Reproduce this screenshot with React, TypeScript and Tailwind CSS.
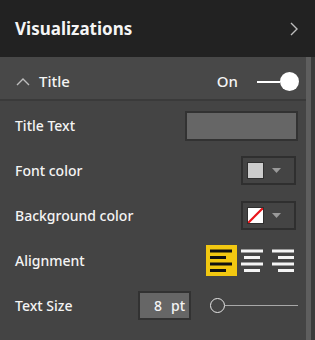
import React from 'react';

const font = { fontFamily: '"Noto Sans", "Open Sans", sans-serif' };

const Row = ({ label, children }: { label: string; children?: React.ReactNode }) => (
  <div className="flex h-[45px] items-center justify-between pl-[15px] pr-[8px]">
    <span className="text-[14px] font-medium text-[#f4f4f4]">{label}</span>
    {children}
  </div>
);

const Caret = () => (
  <svg width="9" height="5" viewBox="0 0 9 5" className="ml-[8px]">
    <path d="M0 0h9L4.5 5z" fill="#9a9a9a" />
  </svg>
);

const ColorPicker = ({ none }: { none?: boolean }) => (
  <div className="mr-[2px] flex h-[29px] w-[55px] items-center border-2 border-[#2f2f2f] pl-[4px]">
    <div className="relative h-[17px] w-[17px] overflow-hidden border border-[#2f2f2f] bg-[#cccccc]">
      {none && (
        <svg width="15" height="15" viewBox="0 0 15 15" className="absolute inset-0 bg-white">
          <path d="M0 15L15 0" stroke="#e8141a" strokeWidth="2.2" />
        </svg>
      )}
    </div>
    <Caret />
  </div>
);

const AlignIcon = ({ kind, active }: { kind: 'left' | 'center' | 'right'; active?: boolean }) => {
  const c = active ? '#111111' : '#f4f4f4';
  const long = 22;
  const short = 16;
  const x = (w: number) => (kind === 'left' ? 4 : kind === 'center' ? 4 + (long - w) / 2 : 4 + long - w);
  const ys = [6, 12.5, 19, 25.5];
  return (
    <div className={`h-[31px] w-[31px] ${active ? 'bg-[#f2c811]' : ''}`}>
      <svg width="31" height="31" viewBox="0 0 31 31">
        {ys.map((y, i) => {
          const w = i % 2 === 0 ? long : short;
          return <rect key={i} x={x(w)} y={y - 1.5} width={w} height="3" fill={c} />;
        })}
      </svg>
    </div>
  );
};

export default function App() {
  return (
    <div className="h-[340px] w-[315px] overflow-hidden bg-[#444444]" style={font}>
      <div className="flex h-[57px] items-center justify-between bg-[#222222] pl-[15px] pr-[17px]">
        <span className="text-[17px] font-bold text-[#f5f5f5]">Visualizations</span>
        <svg width="8" height="14" viewBox="0 0 8 14">
          <path d="M1 1l6 6-6 6" fill="none" stroke="#bdbdbd" strokeWidth="1.4" />
        </svg>
      </div>
      <div className="flex h-[283px]">
        <div className="flex-1">
          <div className="flex h-[44px] items-center border-b-2 border-[#3a3a3a] bg-[#484848] pl-[16px] pr-[7px] pt-[7px]">
            <svg width="14" height="8" viewBox="0 0 14 8">
              <path d="M1 7l6-6 6 6" fill="none" stroke="#bdbdbd" strokeWidth="1.4" />
            </svg>
            <span className="ml-[9px] text-[15px] font-medium text-[#f4f4f4]">Title</span>
            <span className="ml-auto text-[15px] font-medium text-[#f4f4f4]">On</span>
            <div className="ml-[19px] flex items-center">
              <div className="h-[2px] w-[23px] bg-white" />
              <div className="h-[19px] w-[19px] rounded-full bg-white" />
            </div>
          </div>
          <div className="pt-[2px]">
            <Row label="Title Text">
              <div className="h-[30px] w-[113px] border-2 border-[#323232] bg-[#666666]" />
            </Row>
            <Row label="Font color">
              <ColorPicker />
            </Row>
            <Row label="Background color">
              <ColorPicker none />
            </Row>
            <Row label="Alignment">
              <div className="mr-[-1px] flex">
                <AlignIcon kind="left" active />
                <AlignIcon kind="center" />
                <AlignIcon kind="right" />
              </div>
            </Row>
            <div className="flex h-[45px] items-center pl-[15px] pr-[8px]">
              <span className="text-[14px] font-medium text-[#f4f4f4]">Text Size</span>
              <div className="ml-auto flex h-[29px] w-[53px] items-center border-2 border-[#323232] bg-[#666666] pl-[14px] text-[14px] font-medium text-[#f4f4f4]">
                <span>8</span>
                <span className="ml-[9px]">pt</span>
              </div>
              <div className="ml-[19px] flex items-center">
                <div className="h-[15px] w-[15px] rounded-full border-[1.5px] border-[#e6e6e6]" />
                <div className="h-px w-[73px] bg-[#a8a8a8]" />
              </div>
            </div>
          </div>
        </div>
        <div className="w-[5px] bg-[#5e5e5e]" />
        <div className="w-[4px] bg-[#3b3b3b]" />
      </div>
    </div>
  );
}
